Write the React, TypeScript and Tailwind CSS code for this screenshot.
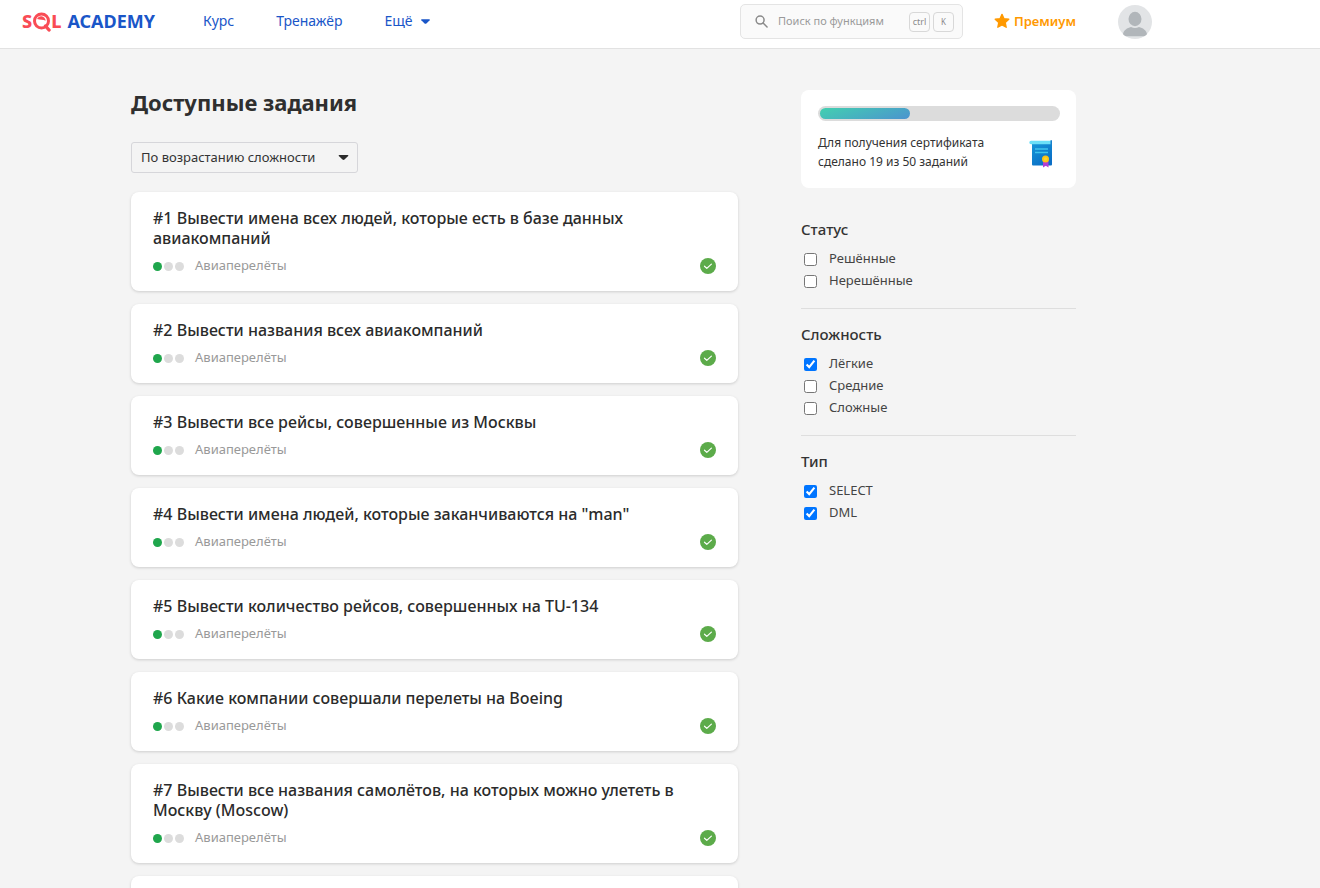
import React, { useState } from "react";

type Task = { id: number; title: string };

const tasks: Task[] = [
  { id: 1, title: "Вывести имена всех людей, которые есть в базе данных авиакомпаний" },
  { id: 2, title: "Вывести названия всех авиакомпаний" },
  { id: 3, title: "Вывести все рейсы, совершенные из Москвы" },
  { id: 4, title: 'Вывести имена людей, которые заканчиваются на "man"' },
  { id: 5, title: "Вывести количество рейсов, совершенных на TU-134" },
  { id: 6, title: "Какие компании совершали перелеты на Boeing" },
  { id: 7, title: "Вывести все названия самолётов, на которых можно улететь в Москву (Moscow)" },
  { id: 8, title: "Вывести время полёта самолётов" },
];

const filters = [
  { title: "Статус", options: [["Решённые", false], ["Нерешённые", false]] },
  { title: "Сложность", options: [["Лёгкие", true], ["Средние", false], ["Сложные", false]] },
  { title: "Тип", options: [["SELECT", true], ["DML", true]] },
] as { title: string; options: [string, boolean][] }[];

function Caret({ className }: { className: string }) {
  return (
    <svg viewBox="0 0 12 6" className={className} fill="currentColor" aria-hidden="true">
      <path d="M1 0h10c.8 0 1.100.7.6 1.200L7.200 5.500c-.7.6-1.700.6-2.400 0L.4 1.200C-.1.7.2 0 1 0z" />
    </svg>
  );
}

function Logo() {
  return (
    <a href="#" className="flex items-center gap-[6px] pb-0.5 text-[18px] leading-6 font-bold">
      <span className="flex font-extrabold text-[#f94c55]">
        <span>S</span>
        <span className="relative w-[19px] text-center">
          Q
          <svg viewBox="0 0 20 20" className="absolute top-[3px] left-0 h-5 w-5" aria-hidden="true">
            <circle cx="9" cy="9" r="8.300" fill="#fff" />
            <path d="M9 12h9v8H9z" fill="#fff" />
            <circle cx="9.500" cy="9" r="7" fill="none" stroke="#f94c55" strokeWidth="3" />
            <path d="M5 7c.8-1.700 2.400-2.800 4.300-2.800 2.500.3 4.300 2.300 4.400 4.600C11 7.300 8.500 8.200 5 7z" fill="#f94c55" />
            <path d="M13.500 14l3.500 4" stroke="#f94c55" strokeWidth="3.400" strokeLinecap="round" />
          </svg>
        </span>
        <span>L</span>
      </span>
      <span className="text-[#1a56c8]">ACADEMY</span>
    </a>
  );
}

function Header() {
  return (
    <header className="border-b border-[#e2e2e2] bg-white">
      <div className="flex h-12 max-w-[1207px] items-center pb-[5px] pl-[22px]">
        <Logo />
        <nav className="ml-[48px] flex items-center gap-[42px] pb-0.5 text-[14px] leading-5 text-[#1a56c8]">
          <a href="#">Курс</a>
          <a href="#">Тренажёр</a>
          <button type="button" className="flex items-center gap-2">
            Ещё
            <Caret className="mt-0.5 h-[5px] w-[9px]" />
          </button>
        </nav>
        <label className="ml-auto flex h-[35px] w-[223px] items-center rounded-[5px] border border-[#e4e4e4] bg-[#fafafa] pr-2 pl-[14px]">
          <svg viewBox="0 0 14 14" className="h-[13px] w-[13px] shrink-0" fill="none" stroke="#8a8a8a" strokeWidth="1.600" aria-hidden="true">
            <circle cx="5.500" cy="5.500" r="4.300" />
            <path d="M8.700 8.700l4.300 4.300" strokeLinecap="round" />
          </svg>
          <input
            type="text"
            aria-label="Поиск по функциям"
            placeholder="Поиск по функциям"
            className="ml-[10px] min-w-0 flex-1 bg-transparent text-[11px] outline-none placeholder:text-[#9a9a9a]"
          />
          <kbd className="flex h-5 w-[21px] items-center justify-center rounded-[4px] border border-[#d8d8d8] font-['Noto_Sans',sans-serif] text-[9px] text-[#8a8a8a]">ctrl</kbd>
          <kbd className="ml-[3px] flex h-5 w-[21px] items-center justify-center rounded-[4px] border border-[#d8d8d8] font-['Noto_Sans',sans-serif] text-[8px] text-[#8a8a8a]">K</kbd>
        </label>
        <a href="#" className="ml-[31px] flex items-center gap-1 pb-0.5 text-[13px] leading-5 font-semibold text-[#f90]">
          <svg viewBox="0 0 24 24" className="h-4 w-4" fill="currentColor" stroke="currentColor" strokeWidth="2" strokeLinejoin="round" aria-hidden="true">
            <path d="M12 2l3 6.600 7.200.8-5.300 4.900 1.400 7.100L12 17.900l-6.300 3.500 1.400-7.100-5.300-4.900 7.200-.8z" />
          </svg>
          Премиум
        </a>
        <button type="button" aria-label="Профиль" className="mr-[55px] ml-[42px]">
          <svg viewBox="0 0 34 34" className="h-[34px] w-[34px]" aria-hidden="true">
            <circle cx="17" cy="17" r="17" fill="#e2e4e6" />
            <ellipse cx="17" cy="14" rx="6.500" ry="7.200" fill="#b1b6ba" />
            <path d="M5 29c1-4 4-6 8-7 2.500 1.400 5.500 1.400 8 0 4 1 7 3 8 7-1 1.500-2 2-3 2.200H8C7 31 6 30.500 5 29z" fill="#b1b6ba" />
          </svg>
        </button>
      </div>
    </header>
  );
}

function TaskCard({ task }: { task: Task }) {
  return (
    <li className="rounded-[8px] bg-white px-[22px] py-4 shadow-[0_1px_3px_rgba(0,0,0,0.16)]">
      <h2 className="text-[16px] leading-5 font-medium text-[#2b2b2b]">
        <a href="#">#{task.id} {task.title}</a>
      </h2>
      <div className="mt-[9px] flex h-[18px] items-center">
        <span className="flex gap-0.5" role="img" aria-label="Лёгкая сложность">
          <span className="h-[9px] w-[9px] rounded-full bg-[#1fa64c]" />
          <span className="h-[9px] w-[9px] rounded-full bg-[#dcdcdc]" />
          <span className="h-[9px] w-[9px] rounded-full bg-[#dcdcdc]" />
        </span>
        <span className="ml-[11px] text-[13px] text-[#999]">Авиаперелёты</span>
        <svg viewBox="0 0 16 16" className="ml-auto h-4 w-4" role="img" aria-label="Решено">
          <circle cx="8" cy="8" r="8" fill="#5cab4a" />
          <path d="M4.500 8.200l2.300 2.200 4.600-4.300" fill="none" stroke="#fff" strokeWidth="1.200" strokeLinecap="round" strokeLinejoin="round" />
        </svg>
      </div>
    </li>
  );
}

function CertificateIcon() {
  return (
    <svg viewBox="0 0 24 28" className="mt-1 h-7 w-6" aria-hidden="true">
      <defs>
        <linearGradient id="sheet" x1="0" y1="0" x2="0.6" y2="1">
          <stop offset="0" stopColor="#1698d8" />
          <stop offset="1" stopColor="#0b6fc6" />
        </linearGradient>
      </defs>
      <path d="M3 2h20v22.500a1 1 0 0 1-1 1H4a1 1 0 0 1-1-1z" fill="url(#sheet)" />
      <path d="M2 .8h20.500v3.400H2A1.700 1.700 0 0 1 2 .8z" fill="#6be0f8" />
      <path d="M21.500 .3h1.500v4.500h-1.500z" fill="#1a7fcb" />
      <path d="M6 9h13M6 12.500h13" stroke="#3fc4ec" strokeWidth="1.500" />
      <path d="M14 20h5.500v7.500l-2.700-1.700L14 27.500z" fill="#b03fd4" />
      <circle cx="16.500" cy="19" r="3.500" fill="#fdc414" />
      <circle cx="16.500" cy="19" r="1.700" fill="#fbd32e" />
    </svg>
  );
}

function Sidebar() {
  return (
    <aside className="w-[275px] shrink-0">
      <section className="rounded-[8px] bg-white px-4 pt-4 pb-[17px]">
        <div
          role="progressbar"
          aria-label="Прогресс"
          aria-valuenow={19}
          aria-valuemin={0}
          aria-valuemax={50}
          className="ml-px h-[15px] rounded-full bg-[#dcdcdc] p-0.5"
        >
          <div className="h-full rounded-full bg-linear-[160deg] from-[#42d0b0] to-[#4c93cf]" style={{ width: `${(19 / 50) * 100}%` }} />
        </div>
        <div className="mt-3 flex items-center justify-between pr-[7px] pl-px">
          <p className="text-[12px] leading-[19px] text-[#333]">
            Для получения сертификата
            <br />
            сделано 19 из 50 заданий
          </p>
          <CertificateIcon />
        </div>
      </section>
      <form className="mt-[29px]">
        {filters.map((group) => (
          <fieldset key={group.title} className="mb-[13px] border-b border-[#dedede] pb-4 last:border-b-0">
            <legend className="mb-[7px] text-[15px] leading-6 font-medium text-[#333]">{group.title}</legend>
            {group.options.map(([label, on]) => (
              <label key={label} className="flex h-[22px] items-center gap-3 pl-[3px] text-[13px] text-[#444]">
                <input type="checkbox" defaultChecked={on} className="h-[13px] w-[13px] accent-[#0075ff]" />
                {label}
              </label>
            ))}
          </fieldset>
        ))}
      </form>
    </aside>
  );
}

export default function App() {
  const [sort, setSort] = useState("asc");
  return (
    <div className="h-screen overflow-hidden bg-[#f4f4f4] font-['Noto_Sans','Open_Sans',sans-serif]">
      <Header />
      <div className="flex max-w-[1207px] items-start gap-[63px] px-[131px] pt-[41px]">
        <main className="min-w-0 flex-1">
          <h1 className="text-[22px] leading-6 font-bold text-[#2f2f2f]">Доступные задания</h1>
          <div className="relative mt-7 w-[227px]">
            <select
              aria-label="Сортировка"
              value={sort}
              onChange={(e) => setSort(e.target.value)}
              className="h-[31px] w-full appearance-none rounded-[3px] border border-[#d6d6da] bg-transparent pl-[9px] text-[13px] text-[#333]"
            >
              <option value="asc">По возрастанию сложности</option>
              <option value="desc">По убыванию сложности</option>
            </select>
            <Caret className="pointer-events-none absolute top-[13px] right-[9px] h-[5px] w-[11px] text-[#2b2b2b]" />
          </div>
          <ul className="mt-[19px] flex flex-col gap-[13px]">
            {tasks.map((task) => (
              <TaskCard key={task.id} task={task} />
            ))}
          </ul>
        </main>
        <Sidebar />
      </div>
    </div>
  );
}
